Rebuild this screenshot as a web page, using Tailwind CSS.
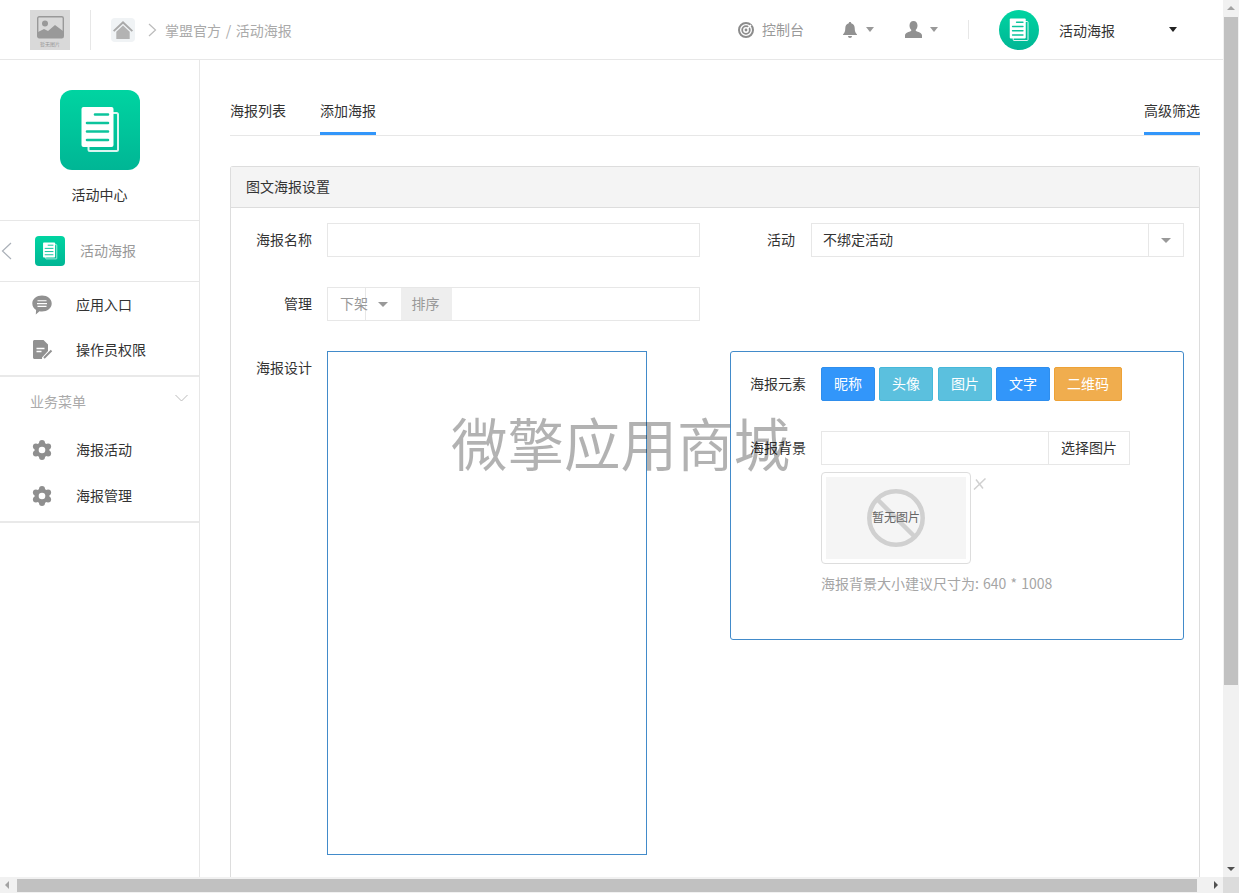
<!DOCTYPE html>
<html lang="zh-CN">
<head>
    <meta charset="UTF-8">
    <meta name="viewport" content="width=device-width, initial-scale=1.0">
    <title>活动海报</title>
    <script src="https://cdn.jsdelivr.net/npm/@tailwindcss/browser@4"></script>
</head>
<body class="bg-white">
    <svg class="hidden">
        <symbol id="doc" viewBox="0 0 80 80">
            <rect x="28.5" y="23" width="29.5" height="38" rx="1.5" fill="none" stroke="#fff" stroke-opacity=".85" stroke-width="2"/>
            <rect x="21.5" y="17" width="32" height="40" rx="2" fill="#fff"/>
            <path d="M35 24.500h13M27 33h21M27 41.500h21M27 50h21" stroke="#0cc49c" stroke-width="2.600" stroke-linecap="round"/>
        </symbol>
        <symbol id="gear" viewBox="0 0 20 20">
            <g fill="#8f8f8f">
                <circle cx="10" cy="10" r="7.500"/>
                <circle cx="10" cy="3" r="3"/>
                <circle cx="10" cy="17" r="3"/>
                <circle cx="3.900" cy="6.500" r="3"/>
                <circle cx="16.100" cy="6.500" r="3"/>
                <circle cx="3.900" cy="13.500" r="3"/>
                <circle cx="16.100" cy="13.500" r="3"/>
            </g>
            <circle cx="10" cy="10" r="3.300" fill="#fff"/>
        </symbol>
    </svg>

    <div class="relative flex flex-col w-[1239px] h-[893px] overflow-hidden text-sm text-[#333] font-['Liberation_Sans','Noto_Sans_CJK_SC',sans-serif]">
        <div class="flex flex-1 min-h-0">
            <div class="flex flex-col w-[1223px]">
                <!-- top bar -->
                <header class="flex items-center h-[60px] shrink-0 border-b border-[#e7e7e7] pl-[30px]">
                    <div class="flex flex-col items-center w-10 h-10 bg-[#d9d9d9]">
                        <svg class="mt-[6px]" width="27" height="24" viewBox="0 0 27 24">
                            <rect x=".7" y=".7" width="25.6" height="21" rx="1.5" fill="none" stroke="#999" stroke-width="1.4"/>
                            <circle cx="8" cy="7.5" r="3" fill="#999"/>
                            <path d="M1 21v-5l6-3 4 2 7-6 8 6v6z" fill="#999"/>
                        </svg>
                        <span class="text-[5px] leading-[7px] mt-[1px] text-[#999]">暂无图片</span>
                    </div>
                    <div class="w-px h-10 bg-[#e7e7e7] ml-5"></div>
                    <div class="flex items-center justify-center w-6 h-6 ml-5 rounded bg-[#f0f3f5]">
                        <svg width="20" height="18" viewBox="0 0 20 18">
                            <path d="M10 0 0 9.500l1.300 1.300L10 2.800l8.700 8 1.300-1.300z" fill="#a9a9a9"/>
                            <path d="M10 4.500 3.300 10.800V18h13.400v-7.200z" fill="#b3b3b3"/>
                        </svg>
                    </div>
                    <svg class="ml-[13px]" width="9" height="14" viewBox="0 0 9 14"><path d="m1 1 6.500 6L1 13" fill="none" stroke="#bbb" stroke-width="1.200"/></svg>
                    <span class="ml-2 text-[#aaa] [word-spacing:1.500px] font-['Noto_Sans_CJK_SC',sans-serif]">掌盟官方 / 活动海报</span>

                    <svg class="ml-auto" width="16" height="16" viewBox="0 0 16 16">
                        <circle cx="8" cy="8" r="7" fill="none" stroke="#8c8c8c" stroke-width="2"/>
                        <circle cx="8" cy="8" r="3.800" fill="none" stroke="#8c8c8c" stroke-width="1.800"/>
                        <path d="M8 8l5-5" stroke="#fff" stroke-width="1.500"/>
                        <circle cx="8" cy="8" r="1.400" fill="#8c8c8c"/>
                    </svg>
                    <span class="ml-2 text-[#999]">控制台</span>
                    <svg class="ml-[39px]" width="14" height="16" viewBox="0 0 14 16">
                        <path d="M7 0c.8 0 1.200.5 1.200 1.200C10.600 1.800 11.700 3.700 11.700 6c0 3.500.8 5 2.300 6.500V13H0v-.5C1.500 11 2.300 9.500 2.300 6c0-2.300 1.100-4.200 3.500-4.800C5.800.5 6.200 0 7 0zM5 14h4c0 1.200-.9 2-2 2s-2-.8-2-2z" fill="#919191"/>
                    </svg>
                    <span class="ml-[9px] border-x-4 border-t-[5px] border-x-transparent border-t-[#999]"></span>
                    <svg class="ml-[31px]" width="17" height="17" viewBox="0 0 17 17">
                        <path d="M8.500 0c2.500 0 4 1.900 4 4.500 0 1.800-.7 3.300-1.700 4.300v1.200c2 .8 6.200 1.700 6.200 4.500V17H0v-2.500c0-2.800 4.200-3.700 6.200-4.500V8.800c-1-1-1.700-2.500-1.700-4.300C4.500 1.900 6 0 8.500 0z" fill="#919191"/>
                    </svg>
                    <span class="ml-2 border-x-4 border-t-[5px] border-x-transparent border-t-[#999]"></span>
                    <div class="w-px h-[19px] ml-[30px] bg-[#e7e7e7]"></div>
                    <div class="flex items-center justify-center w-10 h-10 ml-[30px] rounded-full bg-linear-to-b from-[#00d4a1] to-[#00b695]">
                        <svg width="40" height="40"><use href="#doc"/></svg>
                    </div>
                    <span class="ml-5 font-['Noto_Sans_CJK_SC',sans-serif]">活动海报</span>
                    <span class="ml-[54px] mr-[46px] border-x-4 border-t-[5px] border-x-transparent border-t-[#222]"></span>
                </header>

                <div class="flex flex-1 min-h-0">
                    <!-- sidebar -->
                    <aside class="flex flex-col w-[200px] shrink-0 border-r border-[#e7e7e7]">
                        <div class="flex flex-col items-center h-[161px] shrink-0 pt-[30px] border-b border-[#e7e7e7]">
                            <div class="w-20 h-20 rounded-xl bg-linear-to-b from-[#00d4a1] to-[#00b695]">
                                <svg width="80" height="80"><use href="#doc"/></svg>
                            </div>
                            <span class="mt-[15px] leading-5">活动中心</span>
                        </div>
                        <div class="flex items-center h-[61px] shrink-0 pl-[1px] border-b border-[#e7e7e7]">
                            <svg width="11" height="18" viewBox="0 0 11 18"><path d="M10 1 1.500 9l8.500 8" fill="none" stroke="#aab0b8" stroke-width="1.200"/></svg>
                            <div class="w-[30px] h-[30px] ml-[23px] rounded bg-linear-to-b from-[#00d4a1] to-[#00b695]">
                                <svg width="30" height="30"><use href="#doc"/></svg>
                            </div>
                            <span class="ml-[15px] text-[#999]">活动海报</span>
                        </div>
                        <div class="flex items-center h-[45px] shrink-0 pl-8">
                            <svg width="20" height="20" viewBox="0 0 20 20">
                                <path d="M10 .5c5.300 0 9.700 3.300 9.700 8s-4.400 8-9.700 8c-.9 0-1.700-.1-2.500-.3L3.800 19.500l.3-4.500C1.800 13.500.3 11.200.3 8.500c0-4.700 4.400-8 9.700-8z" fill="#919191"/>
                                <path d="M5.500 5.800h9M5 8.600h10M5.500 11.400h9" stroke="#fff" stroke-width="1.100"/>
                            </svg>
                            <span class="ml-6">应用入口</span>
                        </div>
                        <div class="flex items-center h-[46px] shrink-0 pl-[33px]">
                            <svg width="20" height="20" viewBox="0 0 20 20">
                                <path d="M0 1.500C0 .7.700 0 1.500 0h9L15 4.500V11l-6 6.500V19H1.500C.7 19 0 18.300 0 17.500z" fill="#919191"/>
                                <path d="M3.500 8.500h8M3.500 11.500h5" stroke="#fff" stroke-width="1.300"/>
                                <path d="m11 18 7.500-7.500" stroke="#919191" stroke-width="2"/>
                            </svg>
                            <span class="ml-[23px]">操作员权限</span>
                        </div>
                        <div class="flex items-center justify-between h-[52px] shrink-0 mt-[2px] pl-[30px] pr-[11px] border-t-2 border-[#e9e9e9]">
                            <span class="text-[#aaa]">业务菜单</span>
                            <svg class="mb-2" width="13" height="8" viewBox="0 0 13 8"><path d="m.5 1 6 6 6-6" fill="none" stroke="#bbb" stroke-width="1"/></svg>
                        </div>
                        <div class="flex items-center h-[46px] shrink-0 pl-8">
                            <svg width="20" height="20"><use href="#gear"/></svg>
                            <span class="ml-6">海报活动</span>
                        </div>
                        <div class="flex items-center h-[46px] shrink-0 pl-8">
                            <svg width="20" height="20"><use href="#gear"/></svg>
                            <span class="ml-6">海报管理</span>
                        </div>
                        <div class="h-[2px] mt-[2px] shrink-0 bg-[#e9e9e9]"></div>
                    </aside>

                    <!-- content -->
                    <main class="flex flex-col flex-1 min-w-0 pl-[30px] pr-[23px]">
                        <div class="flex justify-between h-[76px] shrink-0 pt-[31px] border-b border-[#e7e7e7]">
                            <div class="flex gap-[34px]">
                                <span class="h-11 leading-10">海报列表</span>
                                <span class="h-11 leading-10 border-b-[3px] border-[#3296fa]">添加海报</span>
                            </div>
                            <span class="h-11 leading-10 border-b-[3px] border-[#3296fa]">高级筛选</span>
                        </div>

                        <section class="flex flex-col flex-1 min-h-0 mt-[30px] border border-b-0 border-[#ddd] rounded-t-[3px]">
                            <div class="h-[41px] shrink-0 pl-[15px] leading-10 bg-[#f4f4f4] border-b border-[#ddd]">图文海报设置</div>

                            <div class="flex pt-[15px]">
                                <label class="w-[81px] text-right leading-[34px]">海报名称</label>
                                <input class="w-[373px] h-[34px] ml-[15px] border border-[#e7e7e7]" type="text">
                                <label class="w-[95px] text-right leading-[34px]">活动</label>
                                <div class="flex items-center w-[373px] h-[34px] ml-4 border border-[#e7e7e7]">
                                    <span class="flex-1 pl-[11px]">不绑定活动</span>
                                    <div class="flex items-center justify-center w-[35px] h-full border-l border-[#e7e7e7]">
                                        <span class="border-x-[5px] border-t-[5px] border-x-transparent border-t-[#999]"></span>
                                    </div>
                                </div>
                            </div>

                            <div class="flex mt-[30px]">
                                <label class="w-[81px] text-right leading-[34px]">管理</label>
                                <div class="flex w-[373px] h-[34px] ml-[15px] border border-[#e7e7e7]">
                                    <div class="w-[38px] pl-3 leading-8 whitespace-nowrap text-[#999] border-r border-[#e7e7e7]">下架</div>
                                    <div class="flex items-center justify-center w-[35px] pr-[2px]">
                                        <span class="border-x-[5px] border-t-[5px] border-x-transparent border-t-[#999]"></span>
                                    </div>
                                    <div class="w-[51px] pr-[2px] text-center leading-8 text-[#999] bg-[#eee]">排序</div>
                                </div>
                            </div>

                            <div class="flex mt-[30px]">
                                <label class="w-[81px] h-[34px] text-right leading-[34px]">海报设计</label>
                                <div class="w-[320px] h-[504px] ml-[15px] border border-[#428bca]"></div>
                                <div class="w-[454px] h-[289px] ml-[83px] pt-[15px] border border-[#428bca] rounded-[3px]">
                                    <div class="flex">
                                        <label class="w-[75px] text-right leading-[34px]">海报元素</label>
                                        <div class="flex ml-[15px] text-white">
                                            <span class="w-[54px] h-[34px] text-center leading-8 rounded-[2px] border border-[#2f8eed] bg-[#3296fa]">昵称</span>
                                            <span class="w-[54px] h-[34px] ml-1 text-center leading-8 rounded-[2px] border border-[#46b8da] bg-[#5bc0de]">头像</span>
                                            <span class="w-[54px] h-[34px] ml-[5px] text-center leading-8 rounded-[2px] border border-[#46b8da] bg-[#5bc0de]">图片</span>
                                            <span class="w-[54px] h-[34px] ml-1 text-center leading-8 rounded-[2px] border border-[#2f8eed] bg-[#3296fa]">文字</span>
                                            <span class="w-[68px] h-[34px] ml-1 text-center leading-8 rounded-[2px] border border-[#eea236] bg-[#f0ad4e]">二维码</span>
                                        </div>
                                    </div>
                                    <div class="flex mt-[30px]">
                                        <label class="w-[75px] text-right leading-[34px]">海报背景</label>
                                        <div class="ml-[15px]">
                                            <div class="flex w-[309px] h-[34px] border border-[#e7e7e7]">
                                                <div class="flex-1"></div>
                                                <div class="w-[81px] text-center leading-8 border-l border-[#e7e7e7]">选择图片</div>
                                            </div>
                                            <div class="flex mt-[7px]">
                                                <div class="w-[150px] h-[92px] p-1 border border-[#ddd] rounded">
                                                    <div class="flex items-center justify-center w-[140px] h-[82px] bg-[#f5f5f5]">
                                                        <div class="relative flex items-center justify-center w-[58px] h-[58px]">
                                                            <svg class="absolute inset-0" width="58" height="58" viewBox="0 0 58 58">
                                                                <circle cx="29" cy="29" r="26.700" fill="none" stroke="#d0d0d0" stroke-width="4.500"/>
                                                                <path d="M10 10l38 38" stroke="#d0d0d0" stroke-width="4.500"/>
                                                            </svg>
                                                            <span class="relative text-xs whitespace-nowrap text-[#666]">暂无图片</span>
                                                        </div>
                                                    </div>
                                                </div>
                                                <svg class="ml-[2px] mt-[6px]" width="13" height="12" viewBox="0 0 13 12"><path d="M1 11.500 12.500.5M3 1.500l7 9" stroke="#d0d0d0" stroke-width="1.500"/></svg>
                                            </div>
                                            <p class="mt-[9px] leading-5 text-[#a5a5a5] [word-spacing:1px] font-['Noto_Sans_CJK_SC',sans-serif]">海报背景大小建议尺寸为: 640 * 1008</p>
                                        </div>
                                    </div>
                                </div>
                            </div>
                        </section>
                    </main>
                </div>
            </div>

            <!-- vertical scrollbar -->
            <div class="flex flex-col items-center w-4 bg-[#f1f1f1]">
                <span class="mt-[6px] border-x-4 border-b-4 border-x-transparent border-b-[#a3a3a3]"></span>
                <div class="w-[14px] h-[668px] mt-[7px] bg-[#c1c1c1]"></div>
                <span class="mt-auto mb-[6px] border-x-4 border-t-4 border-x-transparent border-t-[#505050]"></span>
            </div>
        </div>

        <!-- horizontal scrollbar -->
        <div class="flex items-center h-4 shrink-0 bg-[#f1f1f1]">
            <span class="ml-[5px] border-y-4 border-r-4 border-y-transparent border-r-[#a3a3a3]"></span>
            <div class="w-[1180px] h-[13px] ml-2 bg-[#c1c1c1]"></div>
            <span class="ml-[17px] border-y-4 border-l-4 border-y-transparent border-l-[#505050]"></span>
            <div class="w-4 h-4 ml-auto bg-[#dcdcdc]"></div>
        </div>

        <!-- watermark -->
        <div class="absolute left-[451px] top-[412px] text-[56.500px] leading-[70px] whitespace-nowrap text-black/30 pointer-events-none">微擎应用商城</div>
    </div>
</body>
</html>
